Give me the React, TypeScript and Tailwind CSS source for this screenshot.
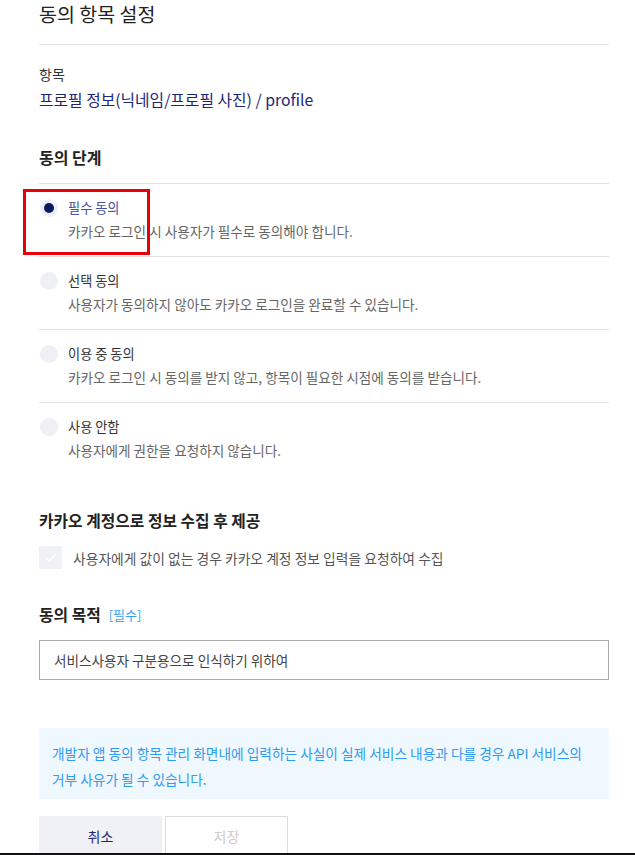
import React from "react";

const stages = [
  { label: "필수 동의", desc: "카카오 로그인 시 사용자가 필수로 동의해야 합니다.", checked: true },
  { label: "선택 동의", desc: "사용자가 동의하지 않아도 카카오 로그인을 완료할 수 있습니다.", checked: false },
  { label: "이용 중 동의", desc: "카카오 로그인 시 동의를 받지 않고, 항목이 필요한 시점에 동의를 받습니다.", checked: false },
  { label: "사용 안함", desc: "사용자에게 권한을 요청하지 않습니다.", checked: false },
];

const App = () => {
  return (
    <div
      className="relative h-[855px] w-[635px] overflow-hidden bg-white break-keep"
      style={{ fontFamily: '"Noto Sans CJK KR", "Noto Sans", sans-serif' }}
    >
      <div className="ml-[39px] w-[570px]">
        <h1 className="text-[19.5px] leading-[28px] text-[#222] pb-[16px] border-b border-[#e2e2e2]">동의 항목 설정</h1>

        <div className="mt-[19px] text-[14px] leading-[20px] text-[#333]">항목</div>
        <div className="mt-[5px] text-[15.8px] leading-[22px] text-[#1c2777]">프로필 정보(닉네임/프로필 사진) / profile</div>

        <h2 className="mt-[35px] text-[16px] leading-[22px] font-bold text-[#222] pb-[15px] border-b border-[#e2e2e2]">동의 단계</h2>

        <div>
          {stages.map((s, i) => (
            <div key={s.label} className={"pt-[13px] pb-[14px] " + (i < stages.length - 1 ? "border-b border-[#e2e2e2]" : "")}>
              <div className="flex items-center h-[22px]">
                <span className="flex items-center justify-center w-[18px] h-[18px] rounded-full bg-[#eef0f6] mr-[10px] ml-[1px]">
                  {s.checked && <span className="w-[10px] h-[10px] rounded-full bg-[#0c1a66]" />}
                </span>
                <span className={"text-[13.2px] leading-[22px] " + (s.checked ? "text-[#44509a]" : "text-[#333]")}>{s.label}</span>
              </div>
              <div className="mt-[1px] pl-[29px] text-[13.6px] leading-[22px] text-[#666]">{s.desc}</div>
            </div>
          ))}
        </div>

        <h2 className="mt-[35px] text-[15.8px] leading-[22px] font-bold text-[#222]">카카오 계정으로 정보 수집 후 제공</h2>
        <div className="mt-[14px] flex items-center h-[23px]">
          <span className="flex items-center justify-center w-[23px] h-[23px] bg-[#f0f1f6] mr-[11px]">
            <svg width="12" height="10" viewBox="0 0 12 10" fill="none">
              <path d="M1.5 5 L4.5 8 L10.5 1.5" stroke="#fff" strokeWidth="1.6" />
            </svg>
          </span>
          <span className="text-[13.8px] leading-[22px] text-[#555]">사용자에게 값이 없는 경우 카카오 계정 정보 입력을 요청하여 수집</span>
        </div>

        <h2 className="mt-[35px] flex items-center h-[22px] text-[15.8px] leading-[22px] font-bold text-[#222]">
          동의 목적
          <span className="ml-[8px] font-normal text-[13px] text-[#3aa3f0]">[필수]</span>
        </h2>
        <div className="mt-[14px] h-[40px] border border-[#aaa] flex items-center px-[14px] text-[13.6px] leading-[22px] text-[#444]">
          서비스사용자 구분용으로 인식하기 위하여
        </div>

        <div className="mt-[48px] bg-[#f0f8ff] pl-[13px] pr-[10px] pt-[12px] pb-[7px] text-[13.7px] leading-[26px] text-[#2d9bf0]">
          개발자 앱 동의 항목 관리 화면내에 입력하는 사실이 실제 서비스 내용과 다를 경우 API 서비스의 거부 사유가 될 수 있습니다.
        </div>

        <div className="mt-[17px] flex gap-[3px]">
          <button className="w-[123px] h-[40px] bg-[#f0f1f6] text-[14px] leading-[22px] text-[#1c2777]">취소</button>
          <button className="w-[123px] h-[40px] border border-[#ddd] bg-white text-[14px] leading-[22px] text-[#ccc]">저장</button>
        </div>
      </div>

      <div className="absolute left-0 right-0 bottom-0 h-[2px] bg-[#111]" />
      <div className="absolute left-[23px] top-[189px] w-[127px] h-[66px] border-[3px] border-[#e8000b]" />
    </div>
  );
};

export default App;
